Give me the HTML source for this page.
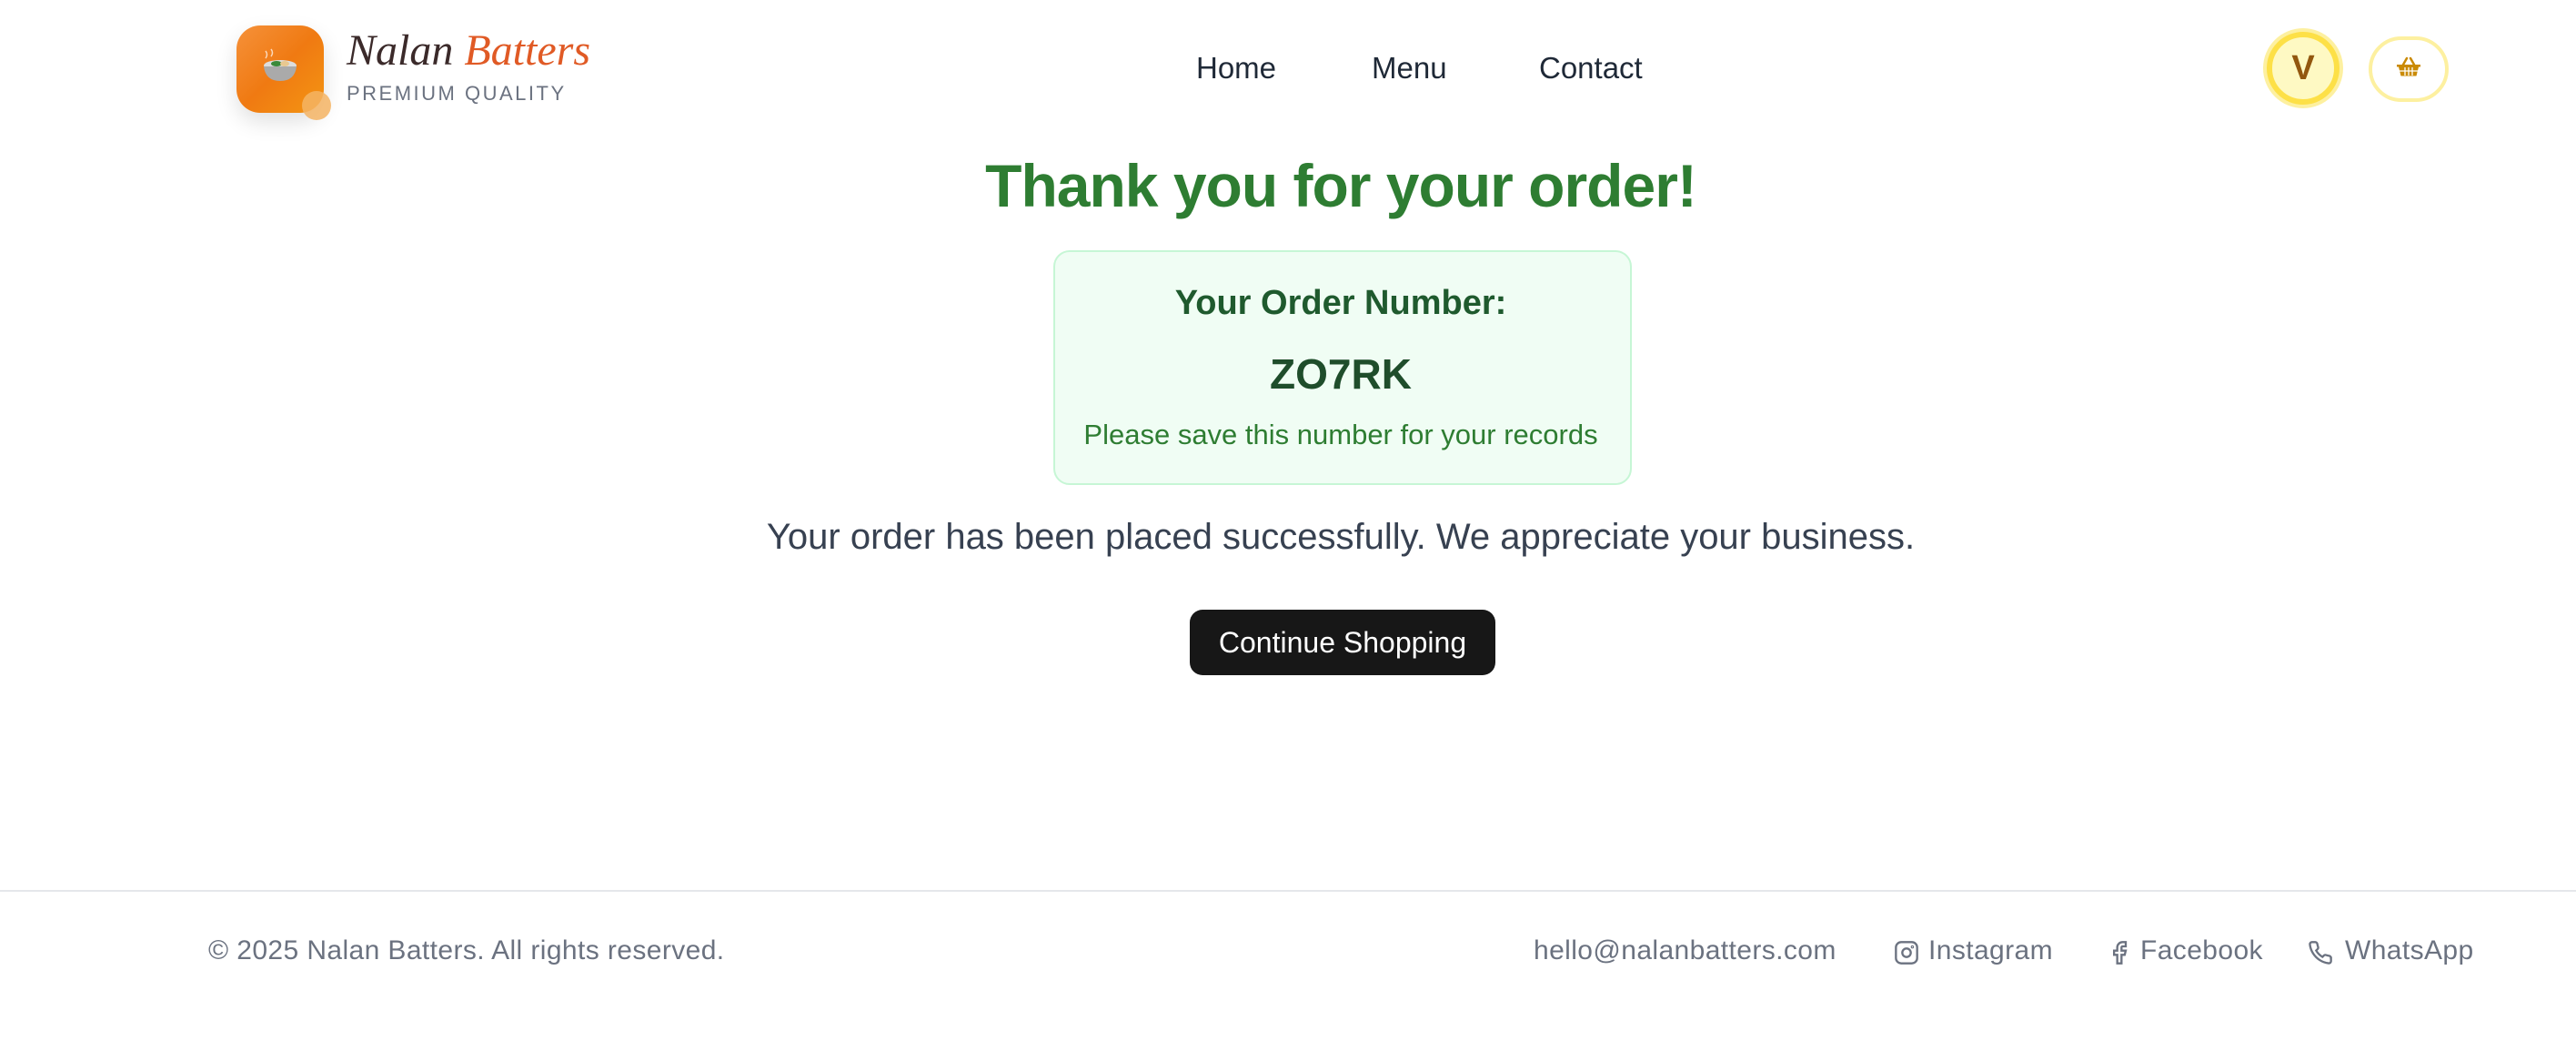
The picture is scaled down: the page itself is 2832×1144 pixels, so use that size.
<!DOCTYPE html>
<html><head><meta charset="utf-8"><style>
*{margin:0;padding:0;box-sizing:border-box}
body{width:2832px;height:1144px;background:#fff;font-family:"Liberation Sans",sans-serif;position:relative;overflow:hidden}
.a{position:absolute;white-space:nowrap}
.nav{font-size:33px;color:#1f2937;top:56px}
.c{left:0;width:2948px;text-align:center}
.f{font-size:30px;color:#6b7280;top:1028px;letter-spacing:.4px}
</style></head><body>
<div class="a" style="left:260px;top:28px;width:96px;height:96px;border-radius:26px;background:linear-gradient(135deg,#f5913a,#f07a12 50%,#f39512);box-shadow:0 10px 24px rgba(0,0,0,.12)"></div>
<div class="a" style="left:332px;top:100px;width:32px;height:32px;border-radius:50%;background:rgba(245,180,100,.85)"></div>
<svg class="a" style="left:282px;top:48px" width="52" height="50" viewBox="0 0 52 50"><path d="M10 8q3 4 0 8M16 6q3 4 0 8" stroke="#fff" stroke-width="1.5" fill="none" opacity=".7"/><ellipse cx="26" cy="24" rx="18" ry="6" fill="#ddd"/><path d="M8 25q2 16 18 16t18-16z" fill="#aaa"/><ellipse cx="22" cy="22" rx="6" ry="3" fill="#3a8a3a"/><ellipse cx="31" cy="22" rx="5" ry="3" fill="#e8c890"/></svg>
<div class="a" style="left:381px;top:28px;font:italic 48px 'Liberation Serif',serif;color:#3b2a2a">Nalan <span style="color:#e05a25">Batters</span></div>
<div class="a" style="left:381px;top:90px;font-size:22px;letter-spacing:2.5px;color:#6b7280">PREMIUM QUALITY</div>
<div class="a nav" style="left:1315px">Home</div>
<div class="a nav" style="left:1508px">Menu</div>
<div class="a nav" style="left:1692px">Contact</div>
<div class="a" style="left:2492px;top:35px;width:80px;height:80px;border-radius:50%;background:#fef9c3;border:6px solid #fde047;box-shadow:0 0 0 4px #fdf0a0;font:bold 38px 'Liberation Sans',sans-serif;color:#92570e;text-align:center;line-height:68px">V</div>
<div class="a" style="left:2604px;top:40px;width:88px;height:72px;border-radius:36px;border:4px solid #fdf0a0"></div>
<svg class="a" style="left:2634px;top:62px" width="28" height="24" viewBox="0 0 28 24"><path d="M8 9l4-7M20 9l-4-7" stroke="#ca8a04" stroke-width="2.5" stroke-linecap="round"/><path d="M1 9h26v2.5H1zM3 11.5h22l-2.5 10h-17z" fill="#ca8a04"/><path d="M10 12v9M14 12v9M18 12v9M4 16h20" stroke="#fff" stroke-width="1.3"/></svg>
<div class="a c" style="top:166px;font-size:66px;font-weight:bold;color:#2e7d32;letter-spacing:-1px">Thank you for your order!</div>
<div class="a" style="left:1158px;top:275px;width:636px;height:258px;border-radius:18px;background:#f0fdf4;border:2px solid #c6f6d5"></div>
<div class="a c" style="top:312px;font-size:38px;font-weight:bold;color:#1f5a2e">Your Order Number:</div>
<div class="a c" style="top:384px;font-size:46px;font-weight:bold;color:#1f4d2b">ZO7RK</div>
<div class="a c" style="top:460px;font-size:31px;color:#2e7d32">Please save this number for your records</div>
<div class="a c" style="top:568px;font-size:40px;color:#374151">Your order has been placed successfully. We appreciate your business.</div>
<div class="a" style="left:1308px;top:670px;width:336px;height:72px;border-radius:14px;background:#171717;color:#fff;font-size:32px;text-align:center;line-height:72px">Continue Shopping</div>
<div class="a" style="left:0;top:978px;width:2832px;height:2px;background:#e5e7eb"></div>
<div class="a f" style="left:229px">© 2025 Nalan Batters. All rights reserved.</div>
<div class="a f" style="left:1686px">hello@nalanbatters.com</div>
<svg class="a" style="left:2082px;top:1033px" width="28" height="28" viewBox="0 0 24 24" fill="none" stroke="#6b7280" stroke-width="2"><rect x="2" y="2" width="20" height="20" rx="5"/><circle cx="12" cy="12" r="4"/><circle cx="17.5" cy="6.5" r=".5"/></svg>
<div class="a f" style="left:2120px">Instagram</div>
<svg class="a" style="left:2316px;top:1033px" width="28" height="28" viewBox="0 0 24 24" fill="none" stroke="#6b7280" stroke-width="2"><path d="M18 2h-3a5 5 0 0 0-5 5v3H7v4h3v8h4v-8h3l1-4h-4V7a1 1 0 0 1 1-1h3z"/></svg>
<div class="a f" style="left:2353px">Facebook</div>
<svg class="a" style="left:2537px;top:1033px" width="28" height="28" viewBox="0 0 24 24" fill="none" stroke="#6b7280" stroke-width="2"><path d="M22 16.9v3a2 2 0 0 1-2.2 2 19.8 19.8 0 0 1-8.6-3.1 19.5 19.5 0 0 1-6-6A19.8 19.8 0 0 1 2.1 4.2 2 2 0 0 1 4.1 2h3a2 2 0 0 1 2 1.7c.1.9.4 1.9.7 2.8a2 2 0 0 1-.5 2.1L8 9.9a16 16 0 0 0 6 6l1.3-1.3a2 2 0 0 1 2.1-.4c.9.3 1.8.6 2.8.7a2 2 0 0 1 1.7 2z"/></svg>
<div class="a f" style="left:2578px">WhatsApp</div>
</body></html>
